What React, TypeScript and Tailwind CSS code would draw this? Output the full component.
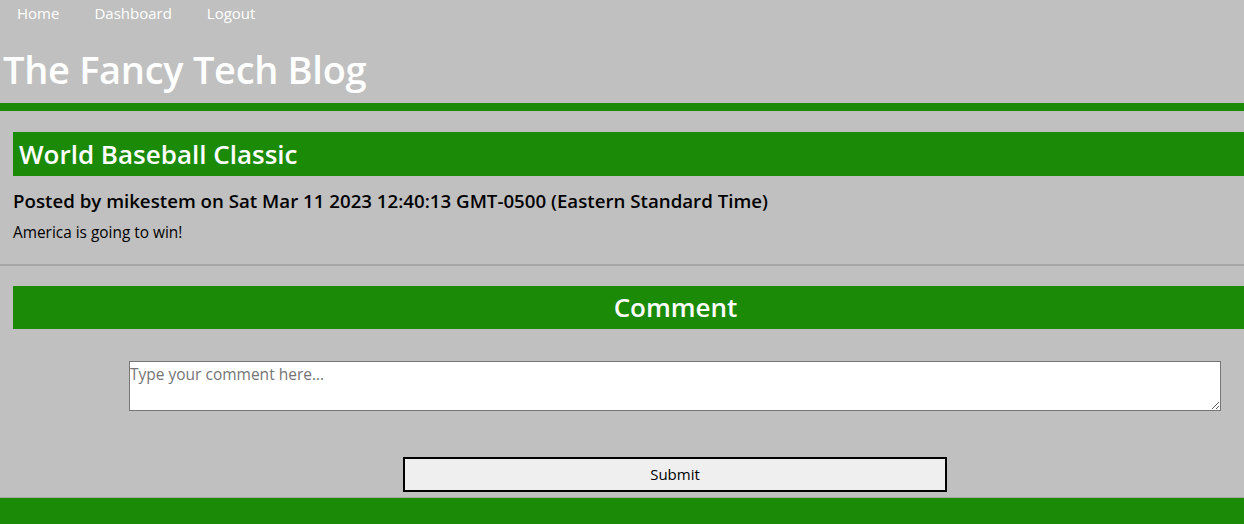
import React from 'react';

const font = { fontFamily: '"Open Sans", "Noto Sans", sans-serif' };

export default function App() {
  return (
    <div className="min-h-[524px] bg-[#c0c0c0] flex flex-col overflow-hidden" style={font}>
      <header className="border-b-8 border-[#1b8a07]">
        <nav className="flex h-[28px] items-center pb-[2px] pl-[17px] gap-[35px] text-[15px] text-white">
          <a href="#">Home</a>
          <a href="#">Dashboard</a>
          <a href="#">Logout</a>
        </nav>
        <h1 className="pl-[3px] pt-[17px] pb-[10px] text-[38px] leading-[48px] font-semibold text-white tracking-[-0.3px]">
          The Fancy Tech Blog
        </h1>
      </header>

      <main className="flex-1 pt-[21px]">
        <section className="pl-[13px] pb-[21px]">
          <h2 className="bg-[#1b8a07] h-[44px] flex items-center pl-[6px] text-[26px] font-semibold text-white">
            World Baseball Classic
          </h2>
          <h3 className="mt-[12px] text-[18.7px] font-semibold text-black leading-[26px]">
            Posted by mikestem on Sat Mar 11 2023 12:40:13 GMT-0500 (Eastern Standard Time)
          </h3>
          <p className="mt-[9px] text-[15.4px] text-black leading-[20px]">America is going to win!</p>
        </section>

        <div className="h-[2px] bg-[#a6a6a6]" />

        <section className="pt-[20px]">
          <h2 className="ml-[13px] bg-[#1b8a07] h-[43px] flex items-center justify-center pl-[94px] text-[26px] font-semibold text-white">
            Comment
          </h2>
          <form className="flex flex-col items-center" onSubmit={(e) => e.preventDefault()}>
            <textarea
              placeholder="Type your comment here..."
              className="mt-[32px] ml-[106px] w-[1092px] h-[50px] bg-white border border-[#767676] text-[15.5px] leading-[20px] p-0 pt-[2px] placeholder:text-[#757575] resize-y"
            />
            <button
              type="submit"
              className="mt-[46px] ml-[106px] w-[544px] h-[35px] bg-[#efefef] border-2 border-black text-[15px] text-black"
            >
              Submit
            </button>
          </form>
        </section>
      </main>

      <footer className="mt-[5px] h-[28px] border-t border-[#a6a6a6] bg-[#1b8a07]" />
    </div>
  );
}
